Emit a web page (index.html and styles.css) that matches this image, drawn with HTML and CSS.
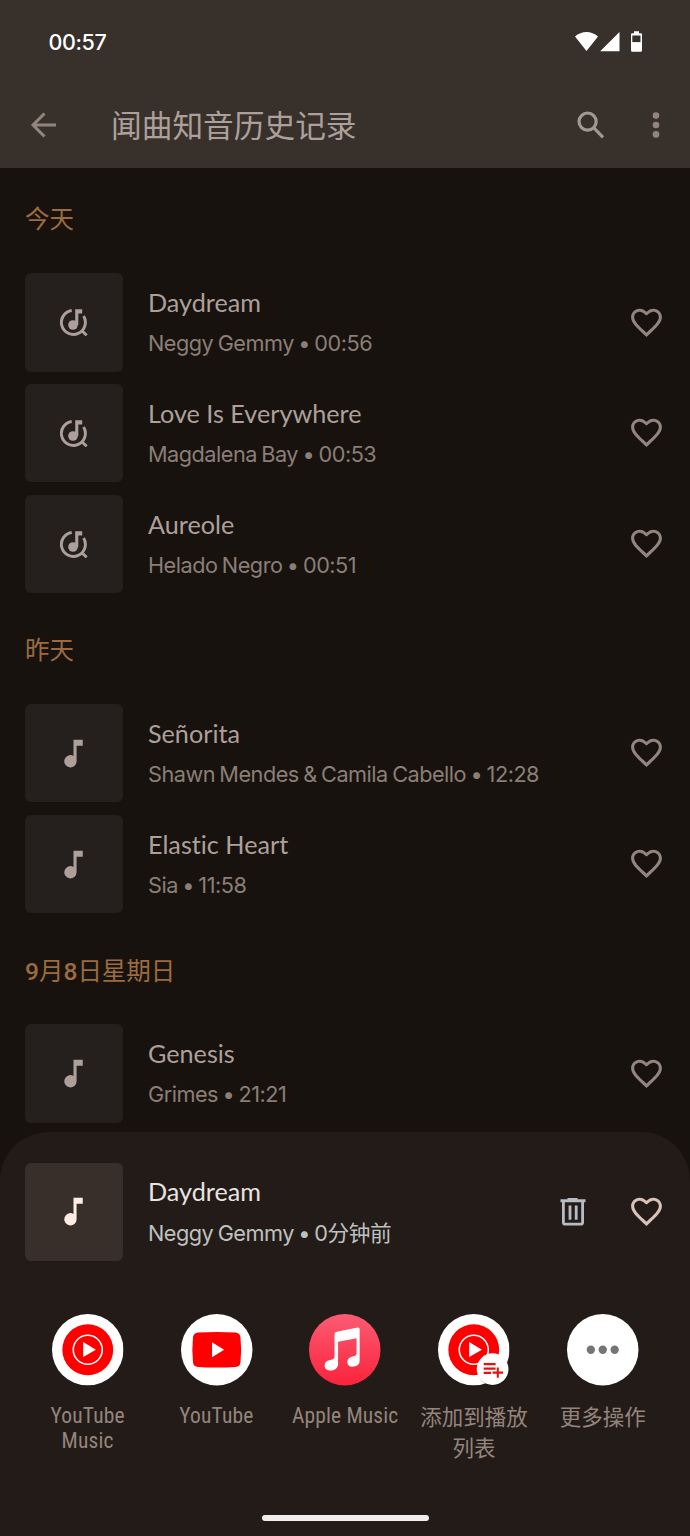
FILE: index.html
```html
<!DOCTYPE html>
<html lang="zh-CN">
<head>
<meta charset="utf-8">
<title>闻曲知音历史记录</title>
<link rel="stylesheet" href="styles.css">
</head>
<body>
<svg class="defs" aria-hidden="true">
  <symbol id="heart" viewBox="0 0 24 24"><path fill="currentColor" d="M16.5 3c-1.74 0-3.41.81-4.5 2.09C10.91 3.81 9.24 3 7.5 3 4.42 3 2 5.42 2 8.5c0 3.78 3.4 6.86 8.55 11.54L12 21.35l1.45-1.32C18.6 15.36 22 12.28 22 8.5 22 5.42 19.58 3 16.5 3zm-4.4 15.55-.1.1-.1-.1C7.14 14.24 4 11.39 4 8.5 4 6.5 5.500 5 7.500 5c1.540 0 3.540 1.490 4.070 2.360h.87C12.960 6.490 14.960 5 16.500 5c2 0 3.500 1.500 3.500 3.500 0 2.890-3.140 5.740-7.900 10.050z"/></symbol>
  <symbol id="note" viewBox="0 0 24 24"><path fill="currentColor" d="M12 3v10.55A4 4 0 1 0 14 17V7h4V3z"/></symbol>
  <symbol id="songsearch" viewBox="0 0 28 28"><path fill="none" stroke="currentColor" stroke-width="2.9" d="M11.7 2.500A12 12 0 1 0 23.600 8.100M21.300 22.200l5.400 5.100"/><path fill="currentColor" d="M15.200 1.300h7v4.200h-3.900V17h-3.100z"/><circle cx="13" cy="17" r="4.800" fill="currentColor"/></symbol>
  <symbol id="ytmusic" viewBox="0 0 72 72"><circle cx="36" cy="36" r="36" fill="#fff"/><circle cx="36" cy="36" r="25.6" fill="#f00"/><circle cx="36" cy="36" r="14.6" fill="none" stroke="#fff" stroke-width="1.6"/><path fill="#fff" d="M31.4 28.2v15.2L44.2 36z"/></symbol>
</svg>
<div class="screen">
  <header class="top">
    <div class="status">
      <span class="clock">00:57</span>
      <svg class="status-icons" viewBox="0 0 68 22"><path fill="#fff" d="M0 5.500C6.500-.5 16.500-.5 23 5.500L11.500 20zM44.500 1v19.200H25.200zM59 .3h5v2h1.800q1.200 0 1.200 1.200v16q0 1.300-1.200 1.300h-8.600q-1.200 0-1.200-1.300v-16q0-1.200 1.200-1.200H59z"/><path fill="#38302b" d="M57.300 4.500h8.200v6.600h-8.200z"/></svg>
    </div>
    <div class="appbar">
      <svg class="back" viewBox="0 0 26 26"><path d="M25 13H2M13.500 1.500L2 13l11.500 11.500" fill="none" stroke="#93857d" stroke-width="3"/></svg>
      <h1>闻曲知音历史记录</h1>
      <svg class="search" viewBox="0 0 28 28"><circle cx="10.600" cy="10.600" r="8.600" fill="none" stroke="#a39892" stroke-width="3.200"/><path d="M16.500 16.500l9.500 9.800" stroke="#a39892" stroke-width="3.200"/></svg>
      <svg class="more" viewBox="0 0 8 26"><g fill="#93857d"><circle cx="4" cy="3.600" r="3.300"/><circle cx="4" cy="13" r="3.300"/><circle cx="4" cy="22.400" r="3.300"/></g></svg>
    </div>
  </header>
  <main class="list">
    <h2>今天</h2>
    <div class="row"><div class="thumb"><svg class="ss"><use href="#songsearch"/></svg></div><div class="info"><p class="title">Daydream</p><p class="sub">Neggy Gemmy • 00:56</p></div><svg class="heart"><use href="#heart"/></svg></div>
    <div class="row"><div class="thumb"><svg class="ss"><use href="#songsearch"/></svg></div><div class="info"><p class="title">Love Is Everywhere</p><p class="sub">Magdalena Bay • 00:53</p></div><svg class="heart"><use href="#heart"/></svg></div>
    <div class="row"><div class="thumb"><svg class="ss"><use href="#songsearch"/></svg></div><div class="info"><p class="title">Aureole</p><p class="sub">Helado Negro • 00:51</p></div><svg class="heart"><use href="#heart"/></svg></div>
    <h2>昨天</h2>
    <div class="row"><div class="thumb"><svg class="note"><use href="#note"/></svg></div><div class="info"><p class="title">Señorita</p><p class="sub">Shawn Mendes &amp; Camila Cabello • 12:28</p></div><svg class="heart"><use href="#heart"/></svg></div>
    <div class="row"><div class="thumb"><svg class="note"><use href="#note"/></svg></div><div class="info"><p class="title">Elastic Heart</p><p class="sub">Sia • 11:58</p></div><svg class="heart"><use href="#heart"/></svg></div>
    <h2><b>9</b>月<b>8</b>日星期日</h2>
    <div class="row"><div class="thumb"><svg class="note"><use href="#note"/></svg></div><div class="info"><p class="title">Genesis</p><p class="sub">Grimes • 21:21</p></div><svg class="heart"><use href="#heart"/></svg></div>
  </main>
  <section class="sheet">
    <div class="row current">
      <div class="thumb"><svg class="note"><use href="#note"/></svg></div>
      <div class="info"><p class="title">Daydream</p><p class="sub">Neggy Gemmy • 0分钟前</p></div>
      <svg class="trash" viewBox="0 0 26 28"><path fill="#b5bcc5" d="M7.500 0h10v1.300h8v3H.5v-3h7z"/><path fill="none" stroke="#b5bcc5" stroke-width="2.800" d="M3.400 3v21.500q0 1.700 1.700 1.700h15.800q1.700 0 1.700-1.700V3M10 7.500v14.300M16.200 7.500v14.300"/></svg>
      <svg class="heart"><use href="#heart"/></svg>
    </div>
    <div class="apps">
      <div class="app"><svg class="app-icon"><use href="#ytmusic"/></svg><span>YouTube<br>Music</span></div>
      <div class="app"><svg class="app-icon" viewBox="0 0 72 72"><circle cx="36" cy="36" r="36" fill="#fff"/><path fill="#f00" d="M17 18.700q19-1.200 38 0 4.300.4 4.900 4.800 1.300 12.500 0 25-.6 4.400-4.900 4.800-19 1.200-38 0-4.300-.4-4.900-4.800-1.300-12.500 0-25 .6-4.400 4.900-4.800z"/><path fill="#fff" d="M31.200 28.500v15L43.500 36z"/></svg><span>YouTube</span></div>
      <div class="app"><svg class="app-icon" viewBox="0 0 72 72"><defs><linearGradient id="am" x2="0" y2="1"><stop stop-color="#fb5c74"/><stop offset="1" stop-color="#fa233b"/></linearGradient></defs><circle cx="36" cy="36" r="36" fill="url(#am)"/><path fill="#fff" d="M28 17.800l21-4.200q2-.3 2 1.700v31.500q0 4.700-4.600 5.900-7.400 1.500-7.800-4.200.1-4.800 5.400-5.800 3.900-.7 3.900-3V24.300L29.300 28v22.700q-.3 4.800-5 5.900-8 1.500-8.600-4.200-.2-5.100 5.600-6.100 4.400-.6 4.400-3.200V20.500q0-2.300 2.300-2.700z"/></svg><span>Apple Music</span></div>
      <div class="app"><svg class="app-icon" viewBox="0 0 72 72"><use href="#ytmusic"/><circle cx="55.500" cy="56.500" r="16" fill="#000" opacity=".25"/><circle cx="55" cy="55.500" r="16" fill="#fff"/><path fill="none" stroke="#e91010" stroke-width="2.100" d="M46 50.500h12M46 55h12M46 59.300h7.500M55 59h10.500M60.200 53.800v10.400"/></svg><span class="cjk">添加到播放<br>列表</span></div>
      <div class="app"><svg class="app-icon" viewBox="0 0 72 72"><circle cx="36" cy="36" r="36" fill="#fff"/><g fill="#757575"><circle cx="24" cy="36" r="4.200"/><circle cx="36" cy="36" r="4.200"/><circle cx="48" cy="36" r="4.200"/></g></svg><span class="cjk">更多操作</span></div>
    </div>
    <div class="home"></div>
  </section>
</div>
</body>
</html>
```
FILE: styles.css
```css
* { box-sizing: border-box; margin: 0; padding: 0; }
body { background: #17120e; font-family: "Lato", "Noto Sans CJK SC", sans-serif; }
svg { display: block; flex: none; overflow: visible; }
.defs { position: absolute; width: 0; height: 0; }
.screen { position: relative; width: 690px; height: 1536px; overflow: hidden; }
.top { height: 168px; background: #38302b; }
.status { display: flex; justify-content: space-between; align-items: center; height: 83px; padding: 0 47px 0 48.500px; }
.clock { font: 500 21.500px/30px "Inter", sans-serif; color: #fff; letter-spacing: -.4px; }
.status-icons { width: 68px; height: 22px; }
.appbar { display: flex; align-items: center; height: 84px; padding: 0 30px 0 30.500px; }
.back { width: 26px; height: 26px; }
h1 { flex: 1; margin: -3px 0 0 54.500px; font: 400 30.700px/44px "Noto Sans CJK SC", sans-serif; color: #ada09b; }
.search { width: 28px; height: 28px; margin-right: 47px; }
.more { width: 8px; height: 26px; }
.list { padding: 6.400px 25px 0; }
h2 { height: 98.750px; padding-top: 28px; font: 400 24.500px/36px "Roboto", "Noto Sans CJK SC", sans-serif; color: #9c6b40; }
h2 b { font-weight: 500; }
.row { display: flex; height: 98.400px; margin-bottom: 12.350px; }
.thumb { display: flex; align-items: center; justify-content: center; width: 98.400px; height: 98.400px; border-radius: 6px; background: #25201d; color: #ada09b; }
.ss, .note { width: 28px; height: 28px; }
.note { width: 37px; height: 37px; margin-right: 1px; }
.info { flex: 1; margin-left: 24.600px; padding-top: 11px; white-space: nowrap; }
.title { font-size: 25.200px; line-height: 36px; font-variant-ligatures: none; color: #ada09b; }
.sub { margin-top: 6px; font: 400 21.700px/34px "Inter", "Noto Sans CJK SC", sans-serif; letter-spacing: -.5px; word-spacing: -1.200px; color: #8b7e76; }
.heart { width: 37px; height: 37px; margin: 30.400px -.4px 0 0; color: #93857d; }
.sheet { position: absolute; left: 0; top: 1131.600px; width: 690px; height: 404.400px; padding: 31px 25px 0; border-radius: 49px 49px 0 0; background: #231b17; }
.current { margin-bottom: 53px; }
.current .info { padding-top: 10px; }
.current .title { color: #e8e4e2; }
.current .sub { margin-top: 7px; color: #bfc1c0; }
.current .thumb { background: #382f2b; color: #ffede4; }
.current .heart { color: #d9c2b6; }
.trash { width: 26px; height: 28px; margin: 35px 42.500px 0 0; }
.apps { display: grid; grid-template-columns: repeat(5, 128.800px); margin-left: -1.800px; height: 201px; }
.app { display: flex; flex-direction: column; align-items: center; text-align: center; }
.app-icon { width: 71.500px; height: 71.500px; }
.app span { margin-top: 18px; font: 400 21.500px/25px "Roboto Condensed", "Roboto", "Noto Sans CJK SC", sans-serif; font-stretch: 75%; letter-spacing: .15px; white-space: nowrap; color: #93857d; }
.app .cjk { margin-top: 17px; line-height: 31px; letter-spacing: 0; }
.home { width: 167px; height: 6px; margin: 0 auto; border-radius: 3px; background: #f0eeec; }
```
